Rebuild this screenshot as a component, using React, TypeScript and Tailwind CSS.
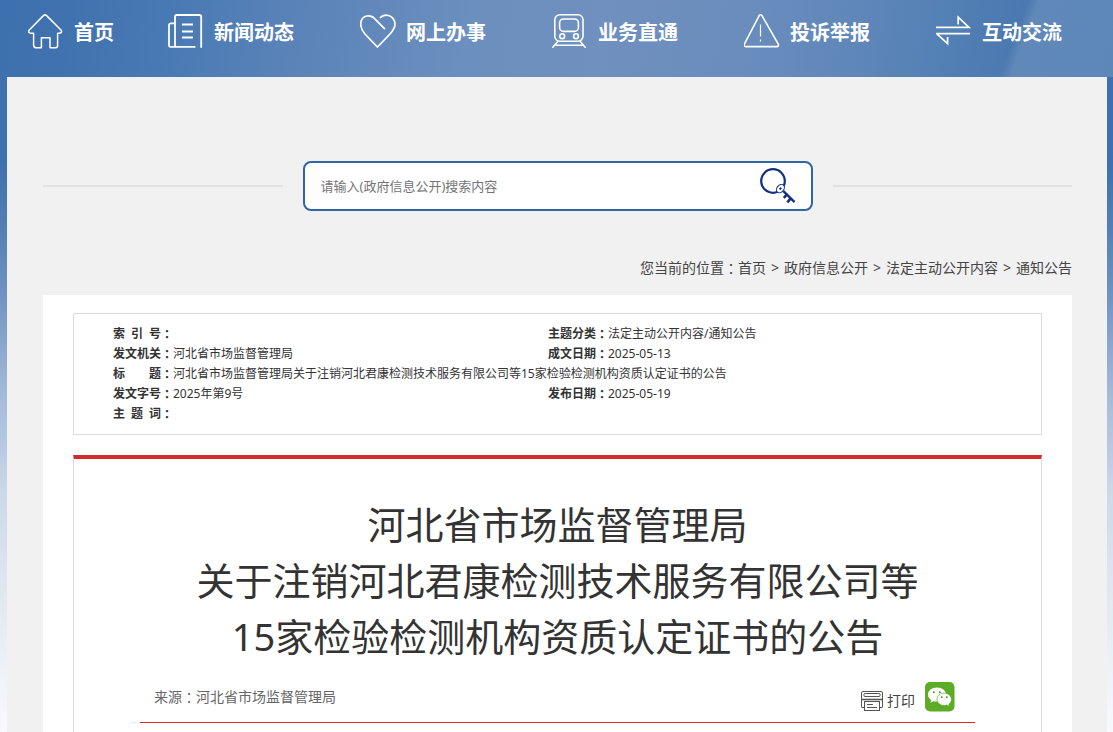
import type { ReactNode } from "react";

function Colon() {
  return <span className="font-['Noto_Sans_CJK_TC',sans-serif] leading-none">：</span>;
}

function HomeIcon() {
  return (
    <svg className="h-9 w-9" viewBox="0 0 36 36" fill="none" stroke="white" strokeWidth="1.5" strokeLinejoin="round" aria-hidden="true">
      <path d="M15.4 1.6Q17 .2 18.6 1.6L33.2 16.2Q34.4 19.2 31 19.2H29.6V31.4Q29.6 33.8 27 33.8H22V23.8H13.4V33.8H8.6Q5.6 33.8 5.6 31V19.2H3Q-.2 19 1 16.2Z" />
    </svg>
  );
}

function NewsIcon() {
  return (
    <svg className="h-9 w-9" viewBox="0 0 36 36" fill="none" stroke="white" strokeWidth="1.8" strokeLinejoin="round" aria-hidden="true">
      <path d="M33.2 33.8V2.6Q33.2 1 31.4 1H8.8Q7 1 7 2.6V33" />
      <path d="M7 9.4H3Q1 9.4 1 11.4V31.6Q1 32.8 2.2 32.8H27.4" />
      <path d="M14 10.5H25M14 17.5H25M14 23.5H25" />
    </svg>
  );
}

function HeartIcon() {
  return (
    <svg className="h-9 w-9" viewBox="0 0 36 36" fill="none" stroke="white" strokeWidth="1.7" aria-hidden="true">
      <path d="M25 15.2L14.8 4.8C10.7 .2 2.2.8 .9 8.4C0 13.2 2.2 16.6 5 20L17.4 33L30 20C33 16.8 35.8 13.2 34.8 8.4C33 .6 24.4-.8 19.8 4" />
    </svg>
  );
}

function TrainIcon() {
  return (
    <svg className="h-9 w-9" viewBox="0 0 36 36" fill="none" stroke="white" strokeWidth="1.6" aria-hidden="true">
      <rect x="2.8" y=".8" width="28.2" height="26.4" rx="5" />
      <rect x="7.6" y="5" width="18.8" height="12.4" rx="4" />
      <circle cx="10.2" cy="22.2" r="2.4" />
      <circle cx="24" cy="22.2" r="2.4" />
      <path d="M6 27.2L.4 33.8M28 27.2L33.6 33.8M3.4 31.2H30.6" />
    </svg>
  );
}

function WarningIcon() {
  return (
    <svg className="h-9 w-9" viewBox="0 0 36 36" fill="none" stroke="white" strokeWidth="1.6" aria-hidden="true">
      <path d="M15.2 1.6Q16.6-.2 18 1.6L34.4 30.4Q34.8 32.4 32.8 32.6H1.6Q-.4 32.4 .2 30.4Z" />
      <path d="M16.5 10.5V22.5M16.5 25.4V27.4" strokeWidth="1.2" />
    </svg>
  );
}

function ExchangeIcon() {
  return (
    <svg className="h-9 w-9" viewBox="0 0 36 36" fill="none" stroke="white" strokeWidth="1.7" aria-hidden="true">
      <path d="M-.8 13.4H33L22.2 3.2V10.4" />
      <path d="M34 19.6H.6L11.6 29.6V23" />
    </svg>
  );
}

function KeyIcon() {
  return (
    <svg className="h-9 w-9" viewBox="0 0 36 36" fill="none" stroke="#12327f" aria-hidden="true">
      <circle cx="13" cy="13" r="11.8" strokeWidth="2.2" />
      <ellipse cx="20.4" cy="20.6" rx="4.6" ry="3.4" transform="rotate(-50 20.4 20.6)" fill="white" strokeWidth="1.1" />
      <path d="M19.6 21.4L21.2 19.8" strokeWidth="2" />
      <path d="M23.4 23.2L34.6 34.2" strokeWidth="2.4" />
      <path d="M26.8 26.6L23.8 29.8M30.6 30.4L27.4 34.4" strokeWidth="2.6" />
    </svg>
  );
}

function PrintIcon() {
  return (
    <svg className="h-5 w-[22px]" viewBox="0 0 22 20" fill="none" stroke="#555" aria-hidden="true">
      <path d="M.5 16V2Q.5 .5 2 .5H20Q21.5 .5 21.5 2V16" />
      <rect x="3" y="2.5" width="16" height="3" rx=".5" />
      <path d="M.5 8.5H21.5" strokeWidth="1.6" />
      <path d="M.5 16.5H3.5M18.5 16.5H21.5" />
      <rect x="3.5" y="10.5" width="15" height="9" fill="white" />
      <path d="M6 13.5H12M6 16.5H16" />
    </svg>
  );
}

function WechatIcon() {
  return (
    <svg className="h-[30px] w-[30px]" viewBox="0 0 30 30" aria-hidden="true">
      <rect width="29.5" height="29.5" rx="5" fill="#5dab26" />
      <path d="M12 5.4C6.8 5.4 3 8.6 3 12.5C3 14.9 4.2 16.8 6.2 18.1L5.4 20.8L8.6 19.2C9.7 19.5 10.8 19.6 12 19.6C17.2 19.6 21 16.4 21 12.5S17.2 5.4 12 5.4Z" fill="white" />
      <path d="M19.2 11.2C14.8 11.2 12 13.9 12 17.3S14.8 23.4 19.2 23.4C20.1 23.4 21 23.3 21.8 23L24.4 24.4L23.8 22.2C25.4 21 26.4 19.4 26.4 17.3C26.4 13.9 23.4 11.2 19.2 11.2Z" fill="white" stroke="#5dab26" strokeWidth=".7" />
      <g fill="#4c8f20">
        <circle cx="8.8" cy="10.2" r="1" />
        <circle cx="14.8" cy="10.2" r="1" />
        <circle cx="16.8" cy="15.2" r=".9" />
        <circle cx="21.8" cy="15.2" r=".9" />
      </g>
    </svg>
  );
}

const navItems: { label: string; icon: ReactNode }[] = [
  { label: "首页", icon: <HomeIcon /> },
  { label: "新闻动态", icon: <NewsIcon /> },
  { label: "网上办事", icon: <HeartIcon /> },
  { label: "业务直通", icon: <TrainIcon /> },
  { label: "投诉举报", icon: <WarningIcon /> },
  { label: "互动交流", icon: <ExchangeIcon /> },
];

const crumbs = ["首页", "政府信息公开", "法定主动公开内容", "通知公告"];

function Label({ text }: { text: string }) {
  return (
    <th scope="row" className="h-5 p-0 font-bold whitespace-nowrap">
      <span className="flex">
        <span className="w-12 [text-align-last:justify]">{text}</span>
        <span className="flex items-center">
          <Colon />
        </span>
      </span>
    </th>
  );
}

function Cell({ children, span }: { children?: ReactNode; span?: number }) {
  return (
    <td colSpan={span} className="p-0 whitespace-nowrap">
      {children}
    </td>
  );
}

export default function App() {
  return (
    <div className="min-h-screen bg-[linear-gradient(180deg,#3d70ae_0px,#3f71ae_163px,#5580b5_231px,#7094c2_296px,#92add0_360px,#a8bddc_403px,#b8c8e2_446px,#cad8e8_489px,#dde5f0_574px,#ebf1f8_660px,#f7f9fe_728px)] font-['Noto_Sans','Noto_Sans_CJK_SC',sans-serif] text-[#333]">
      <header className="bg-[linear-gradient(111deg,transparent_90%,#6089ba_91%,#5c87b8_100%),linear-gradient(100deg,#3d70ae_0%,#4072af_6%,#4a7ab4_16%,#5c84b9_28%,#6b8fbe_42%,#7090bf_54%,#6a8dbd_66%,#6087ba_76%,#5280b5_85%,#4a78b0_91%)] pt-3.5 pb-[27px]">
        <nav className="grid grid-cols-[140fr_192fr_192fr_192fr_192fr_128fr] pr-[49px] pl-7">
          {navItems.map((item) => (
            <a key={item.label} href="#" className="flex items-center gap-2.5 text-xl font-bold whitespace-nowrap text-white">
              {item.icon}
              <span className="pt-0.5">{item.label}</span>
            </a>
          ))}
        </nav>
      </header>

      <main className="mr-1.5 ml-[7px] min-h-[655px] bg-[#f1f1f1] pt-[84px] pr-[35px] pl-9">
        <form className="flex items-center gap-5" onSubmit={(e) => e.preventDefault()}>
          <div className="h-0.5 flex-1 bg-[#e1e1e1]" />
          <div className="flex h-[50px] w-[510px] items-center rounded-lg border-2 border-[#2e66a6] bg-white pr-[15px] pl-4">
            <input
              type="text"
              aria-label="搜索内容"
              placeholder="请输入(政府信息公开)搜索内容"
              className="min-w-0 flex-1 bg-transparent pt-0.5 text-[13px] outline-none placeholder:text-[#757575]"
            />
            <button type="submit" aria-label="搜索">
              <KeyIcon />
            </button>
          </div>
          <div className="h-0.5 flex-1 bg-[#e1e1e1]" />
        </form>

        <div className="flex h-[84px] items-end justify-end pb-[17px] text-sm leading-5 text-[#444]">
          <span className="flex items-center">
            您当前的位置
            <Colon />
          </span>
          {crumbs.map((c, i) => (
            <span key={c}>
              {i > 0 && <span className="mx-[5px]">&gt;</span>}
              <a href="#">{c}</a>
            </span>
          ))}
        </div>

        <div className="bg-white px-[30px] pt-[18px]">
          <div className="border border-[#dcdcdc] py-2.5 pr-[58px] pl-[39px]">
            <table className="w-full table-fixed border-collapse text-xs leading-5">
              <colgroup>
                <col className="w-[60px]" />
                <col />
                <col className="w-[60px]" />
                <col />
              </colgroup>
              <tbody>
                <tr>
                  <Label text="索 引 号" />
                  <Cell />
                  <Label text="主题分类" />
                  <Cell>法定主动公开内容/通知公告</Cell>
                </tr>
                <tr>
                  <Label text="发文机关" />
                  <Cell>河北省市场监督管理局</Cell>
                  <Label text="成文日期" />
                  <Cell>2025-05-13</Cell>
                </tr>
                <tr>
                  <Label text="标 题" />
                  <Cell span={3}>河北省市场监督管理局关于注销河北君康检测技术服务有限公司等15家检验检测机构资质认定证书的公告</Cell>
                </tr>
                <tr>
                  <Label text="发文字号" />
                  <Cell>2025年第9号</Cell>
                  <Label text="发布日期" />
                  <Cell>2025-05-19</Cell>
                </tr>
                <tr>
                  <Label text="主 题 词" />
                  <Cell span={3} />
                </tr>
              </tbody>
            </table>
          </div>

          <article className="mt-5 min-h-[277px] border-x border-t-4 border-x-[#dcdcdc] border-t-[#d32c2c] px-[66px] pt-[37px]">
            <h1 className="text-center text-[38px] leading-[56px]">
              河北省市场监督管理局
              <br />
              关于注销河北君康检测技术服务有限公司等
              <br />
              15家检验检测机构资质认定证书的公告
            </h1>
            <div className="flex items-center pt-[18px] pr-5 pb-2.5 pl-3.5 text-sm leading-5 text-[#666]">
              <span className="flex flex-1 items-center">
                来源
                <Colon />
                河北省市场监督管理局
              </span>
              <button type="button" className="mr-2.5 flex items-center gap-1 pt-2 text-[#444]">
                <PrintIcon />
                打印
              </button>
              <button type="button" aria-label="微信">
                <WechatIcon />
              </button>
            </div>
            <div className="h-px bg-[#d32c2c]" />
          </article>
        </div>
      </main>
    </div>
  );
}
